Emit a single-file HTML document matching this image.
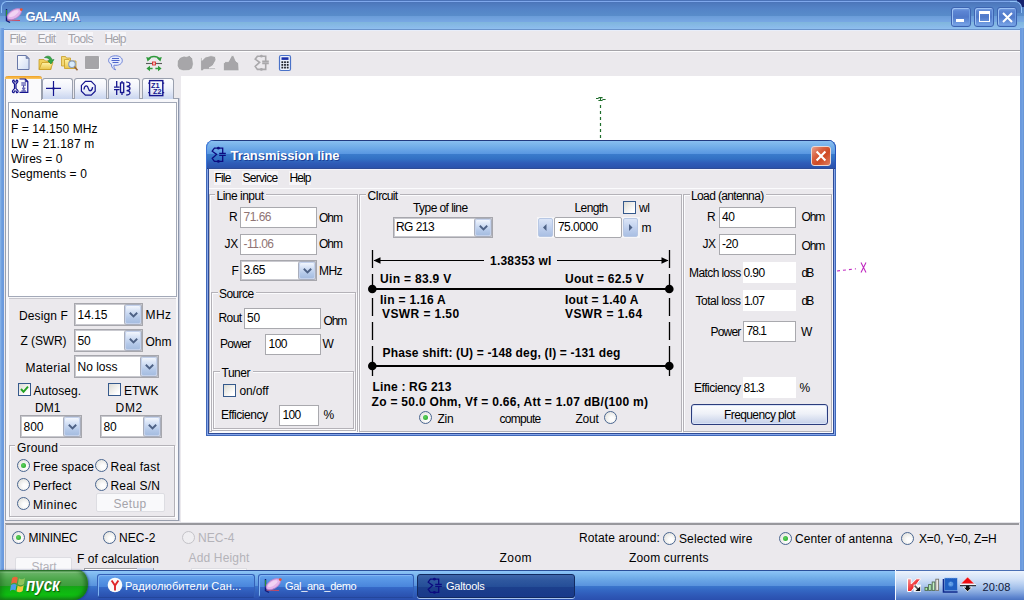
<!DOCTYPE html>
<html>
<head>
<meta charset="utf-8">
<title>GAL-ANA</title>
<style>
*{box-sizing:border-box;margin:0;padding:0}
html,body{width:1024px;height:600px;overflow:hidden;background:#fff}
body{font-family:"Liberation Sans",sans-serif;font-size:12px;color:#000;position:relative}
.a{position:absolute}
.t{position:absolute;white-space:pre;line-height:16px;height:16px}
.d{letter-spacing:-0.45px}
.b{font-weight:700}
.bg{background:#ebe9ed}
/* main window */
#mtitle{left:0;top:0;width:1024px;height:30px;background:linear-gradient(#4a72b8 0,#4a72b8 1px,#7fa8ec 1px,#7fa8ec 2px,#4a72b8 2px,#4d78bc 3px,#5382c6 8px,#588cca 15.5px,#6a9cd8 16px,#78a8e4 22px,#80b6de 22.5px,#8cbcec 28px,#90c0f0 29px,#6a94cc 29px,#6a94cc 30px)}
#mleft{left:0;top:28px;width:4px;height:544px;background:linear-gradient(90deg,#8db9ec,#79a7e2 1px,#6d9de0 2px,#6a98dc)}
#mright{left:1020px;top:28px;width:4px;height:544px;background:linear-gradient(90deg,#6a98dc,#6d9de0 2px,#79a7e2 3px,#5b87cc)}
.cap{width:20px;height:20px;border:1px solid #3d64b2;border-radius:3px;background:linear-gradient(#7ba4e4 0,#5d86d4 3px,#5079c9 9px,#6792db 14px,#82aeec 19px);box-shadow:inset 1px 1px 0 #9dc2f3,inset -1px -1px 0 #6f9ce0}
/* inputs */
.in{position:absolute;background:#fff;border:1px solid #a9a9ae;font-size:12px;line-height:14px;white-space:pre;overflow:hidden}
.in span{position:absolute;left:3px;top:3px}
.combo{position:absolute;background:#fff;border:1px solid #a7a7ad;box-shadow:inset 0 0 0 1px #c9c9cf}
.cbtn{position:absolute;right:1px;top:1px;bottom:1px;width:16px;border:1px solid #c3d1ec;border-radius:2px;background:linear-gradient(#f2f6fd,#d2dff4 35%,#b4c9e9 70%,#a6bde0);box-shadow:0 0 0 1px #a9aebc}
.cbtn svg{position:absolute;left:3px;top:50%;margin-top:-3px}
.grp{position:absolute;border:1px solid #b4b2b8;box-shadow:1px 1px 0 #fbfbfd, inset 1px 1px 0 #fbfbfd}
.gl{position:absolute;background:#ebe9ed;white-space:pre;line-height:14px;height:14px;padding:0 2px}
.rad{position:absolute;width:13px;height:13px;border-radius:50%;border:1px solid #4a6690;background:radial-gradient(circle at 62% 62%,#fdfdfd 20%,#dddcd6 95%)}
.rad.on::after{content:"";position:absolute;left:3px;top:3px;width:5px;height:5px;border-radius:50%;background:radial-gradient(circle at 40% 40%,#5fd35f,#21a121)}
.rad.dis{border-color:#c4c3c8;background:#efeef1}
.chk{position:absolute;width:13px;height:13px;border:1px solid #35598c;background:linear-gradient(135deg,#dcdbd4,#fff 80%)}
.menuit{position:absolute;background:#f6f5f8;height:14px;line-height:14px;white-space:pre}
</style>
</head>
<body>
<!-- ===== main window frame ===== -->
<div class="a bg" style="left:4px;top:30px;width:1016px;height:46px"></div>
<div class="a" id="mtitle"></div>
<div class="a" style="left:4px;top:30px;width:1016px;height:1px;background:#e8eefa"></div>
<div class="a" style="left:0;top:0;width:6px;height:6px;background:#4f7cc4"></div>
<div class="a" style="left:1px;top:1px;width:12px;height:12px;border-top:1px solid #8fc0f6;border-left:1px solid #8fc0f6;border-radius:6px 0 0 0"></div>
<div class="a" style="left:1017px;top:0;width:7px;height:7px;background:#14226e"></div>
<div class="a" style="left:1010px;top:1px;width:12px;height:12px;background:#4e7abf;border-top:1px solid #8fc0f6;border-right:1px solid #8fc0f6;border-radius:0 7px 0 0"></div>
<div class="a" id="mleft"></div>
<div class="a" id="mright"></div>
<!-- title -->
<svg class="a" style="left:5px;top:6px" width="19" height="18" viewBox="0 0 19 18">
  <path d="M1.5 3 L1.5 14.5 L5 16.5" fill="none" stroke="#141a7a" stroke-width="1.4"/>
  <path d="M1.5 4 L1.5 10" stroke="#2a8a3a" stroke-width="1.2"/>
  <path d="M2.5 14 L15 14.5" stroke="#d0475a" stroke-width="1.2"/>
  <ellipse cx="9.3" cy="8.2" rx="8" ry="4.3" transform="rotate(-32 9.3 8.2)" fill="#e3b3ea" stroke="#b67fc9" stroke-width=".8"/>
  <ellipse cx="8.8" cy="7.6" rx="5.5" ry="2.2" transform="rotate(-32 8.8 7.6)" fill="#f1d3f3"/>
  <circle cx="16.3" cy="3.6" r="1.4" fill="#f05030"/>
</svg>
<div class="t" style="left:25.5px;top:9px;font-size:13px;letter-spacing:-0.85px;font-weight:700;color:#fff;text-shadow:1px 1px 0 rgba(40,70,140,.55);">GAL-ANA</div>
<div class="a cap" style="left:951px;top:7px"><div class="a" style="left:4px;top:11px;width:8px;height:3px;background:#fff"></div></div>
<div class="a cap" style="left:974px;top:7px"><div class="a" style="left:4px;top:3px;width:11px;height:11px;border:1px solid #fff;border-top-width:3px"></div></div>
<div class="a cap" style="left:997px;top:7px"><svg class="a" style="left:3px;top:3px" width="13" height="13" viewBox="0 0 13 13"><path d="M2 2 L11 11 M11 2 L2 11" stroke="#fff" stroke-width="2"/></svg></div>
<svg class="a" style="left:251px;top:51px" width="24" height="24" viewBox="0 0 24 24"><g fill="none" stroke="#a9a8ab" stroke-width="1.6"><path d="M14.7 10.4 V5.2 H6.4 L4.2 8.2 L8.6 11.4 L4.2 15.4 L6.4 18.4 H14.7 V12.4 M11.2 10.4 H17.8 M11.2 12.4 H17.8"/></g><circle cx="10.4" cy="5.2" r="1.4" fill="#a9a8ab"/><circle cx="10.4" cy="18.4" r="1.4" fill="#a9a8ab"/></svg>

<!-- menu -->
<div class="a" style="left:10px;top:32px;width:16px;height:13px;background:#f6f5f8"></div><div class="t" style="left:9.5px;top:31px;font-size:12px;letter-spacing:-0.71px;color:#a3a2a8;">File</div>
<div class="a" style="left:37.5px;top:32px;width:18.5px;height:13px;background:#f6f5f8"></div><div class="t" style="left:37.5px;top:31px;font-size:12px;letter-spacing:-0.67px;color:#a3a2a8;">Edit</div>
<div class="a" style="left:68px;top:32px;width:25px;height:13px;background:#f6f5f8"></div><div class="t" style="left:68.0px;top:31px;font-size:12px;letter-spacing:-0.60px;color:#a3a2a8;">Tools</div>
<div class="a" style="left:104.5px;top:32px;width:21.0px;height:13px;background:#f6f5f8"></div><div class="t" style="left:104.5px;top:31px;font-size:12px;letter-spacing:-0.92px;color:#a3a2a8;">Help</div>

<div class="a" style="left:4px;top:50px;width:1016px;height:1px;background:#a5a4a9"></div>
<div class="a" style="left:4px;top:51px;width:1016px;height:1px;background:#fdfdfe"></div>
<!--MENU-->
<!-- toolbar -->
<svg class="a" style="left:14px;top:53px" width="282" height="20" viewBox="0 0 282 20">
  <defs>
    <linearGradient id="pg" x1="0" y1="0" x2="1" y2="1"><stop offset="0" stop-color="#ffffff"/><stop offset="1" stop-color="#cfdcf4"/></linearGradient>
    <linearGradient id="fy" x1="0" y1="0" x2="0" y2="1"><stop offset="0" stop-color="#fff3a8"/><stop offset="1" stop-color="#e9c44a"/></linearGradient>
  </defs>
  <!-- new -->
  <path d="M3.5 2.5 H12 L15 5.5 V16.5 H3.5 Z" fill="url(#pg)" stroke="#6878a8" stroke-width="1"/>
  <path d="M12 2.5 V5.5 H15 Z" fill="#7f8db4" stroke="#6878a8" stroke-width=".6"/>
  <!-- open -->
  <path d="M25 6.5 H30 L31.5 8 H37 V16.5 H25 Z" fill="#f0cf5a" stroke="#c79c24" stroke-width=".8"/>
  <path d="M25 16.5 L28 9.5 H39 L36.5 16.5 Z" fill="url(#fy)" stroke="#c79c24" stroke-width=".8"/>
  <path d="M30.5 4.5 C33.5 2 37.5 3 38 7 L40 6.5 L37 11 L33.8 7.8 L35.8 7.5 C35.4 5.4 33 4.6 30.5 4.5 Z" fill="#35a846" stroke="#1f7a2d" stroke-width=".6"/>
  <!-- folder search -->
  <path d="M47.5 3.5 H51.5 L52.5 5 H56.5 V13 H47.5 Z" fill="#f3d876" stroke="#c79c24" stroke-width=".8"/>
  <path d="M50.5 6.5 H55 L56 8 H62 V15.5 H50.5 Z" fill="url(#fy)" stroke="#c79c24" stroke-width=".8"/>
  <circle cx="58" cy="11.2" r="3.3" fill="#d8ecfb" stroke="#8a9ab8" stroke-width="1.1"/>
  <path d="M60.5 13.8 L63.5 17.2" stroke="#9a6a3a" stroke-width="1.6"/>
  <!-- gray square -->
  <rect x="72" y="4" width="14" height="13" fill="#fcfcfd"/>
  <rect x="71" y="3" width="14" height="13" rx="1" fill="#a6a5a8"/>
  <!-- speech bubble -->
  <path d="M101.5 2.8 C106 2.8 108.3 5 108.3 7.6 C108.3 10.4 105.6 12.3 102 12.3 C101.2 12.3 100.6 12.2 100 12.1 C99.6 13.6 100.2 15.2 101.6 16.8 C98.6 16 97.3 14 97.4 11.2 C95.6 10.4 94.6 9.1 94.6 7.6 C94.6 5 97 2.8 101.5 2.8 Z" fill="#e6ebfd" stroke="#6a80d6" stroke-width="1"/>
  <path d="M98 5.5 H105 M97.5 7.5 H105.5 M98.5 9.5 H104.5" stroke="#4e66cc" stroke-width="1"/>
  <!-- green arrows (local = abs-14, abs-53) -->
  <g transform="translate(-14 -53)">
  <path d="M148.6 59.2 C150.6 55.6 157.4 55.6 159.4 59.2" fill="none" stroke="#2f9a3c" stroke-width="1.5"/>
  <path d="M146.2 57 L151 58.2 L147.6 61.4 Z M161.8 57 L157 58.2 L160.4 61.4 Z" fill="#2f9a3c"/>
  <path d="M146 63.5 H162" stroke="#5a5a5a" stroke-width="1.1"/>
  <rect x="152.5" y="62" width="3" height="3" fill="#f6c0c0" stroke="#d83030" stroke-width=".9"/>
  <path d="M148.5 68.5 H152.6 M155.4 68.5 H159.5" stroke="#2f9a3c" stroke-width="1.4"/>
  <path d="M146.4 68.5 L150 65.8 V71.2 Z M161.6 68.5 L158 65.8 V71.2 Z" fill="#2f9a3c"/>
  <g fill="#a7a6a9" stroke="#f6f6f8" stroke-width=".7">
  <path d="M177.4 61 L180 57.4 L184 56 L186.5 56.6 L189.4 55.4 L192.6 58.4 L193.4 64 L192.4 68.4 L189 70.6 L183 70.8 L179 69.4 L177.2 66 Z"/>
  <path d="M200.6 57.4 H202 V60.4 L205.4 57 L211 55.6 L215.4 56.6 L216 60 L213 65.4 L209 68 H215.6 V69.4 H204 L202.4 70.8 H200.6 Z"/>
  <path d="M223.4 70.8 V63.6 L225.6 61.6 H228.4 L231.6 55.6 H233.6 L236 61.2 L238.6 63 L239 70.8 Z"/>
  </g>
  </g>
  
  <!-- calculator -->
  <rect x="265.5" y="2.5" width="11" height="15" rx="1.5" fill="#eef3fc" stroke="#4a72c8" stroke-width="1.2"/>
  <rect x="267.5" y="4.3" width="7" height="2.6" fill="#1b2fa8"/>
  <g fill="#20242c">
  <rect x="267.4" y="8.3" width="1.8" height="1.8"/><rect x="270.1" y="8.3" width="1.8" height="1.8"/><rect x="272.8" y="8.3" width="1.8" height="1.8"/>
  <rect x="267.4" y="11" width="1.8" height="1.8"/><rect x="270.1" y="11" width="1.8" height="1.8"/><rect x="272.8" y="11" width="1.8" height="1.8"/>
  <rect x="267.4" y="13.7" width="1.8" height="1.8"/><rect x="270.1" y="13.7" width="1.8" height="1.8"/><rect x="272.8" y="13.7" width="1.8" height="1.8"/>
  </g>
</svg>
<!--TOOLBAR-->
<div class="a" style="left:4px;top:76px;width:177px;height:447px;background:#ebe9ed"></div>
<div class="a" style="left:5px;top:98px;width:174px;height:423px;background:#f7f7fa;border:1px solid #9aa0ae;border-right-color:#8d96ab;box-shadow:1px 0 0 #c9cede"></div>
<div class="a" style="left:42px;top:78px;width:31px;height:21px;border:1px solid #9aa0ae;border-bottom:none;border-radius:3px 3px 0 0;background:linear-gradient(#fdfdfe,#f0f3fb 45%,#c9d5ef)"></div>
<div class="a" style="left:74px;top:78px;width:33px;height:21px;border:1px solid #9aa0ae;border-bottom:none;border-radius:3px 3px 0 0;background:linear-gradient(#fdfdfe,#f0f3fb 45%,#c9d5ef)"></div>
<div class="a" style="left:108px;top:78px;width:32px;height:21px;border:1px solid #9aa0ae;border-bottom:none;border-radius:3px 3px 0 0;background:linear-gradient(#fdfdfe,#f0f3fb 45%,#c9d5ef)"></div>
<div class="a" style="left:142px;top:78px;width:32px;height:21px;border:1px solid #9aa0ae;border-bottom:none;border-radius:3px 3px 0 0;background:linear-gradient(#fdfdfe,#f0f3fb 45%,#c9d5ef)"></div>
<div class="a" style="left:5px;top:76px;width:37px;height:24px;border:1px solid #9aa0ae;border-bottom:none;border-top:none;border-radius:3px 3px 0 0;background:#fafafc"></div>
<div class="a" style="left:5px;top:76px;width:37px;height:3px;border-radius:3px 3px 0 0;background:linear-gradient(#f0a020,#fbc968)"></div>
<svg class="a" style="left:5px;top:76px" width="175" height="24" viewBox="5 76 175 24"><g fill="none" stroke="#15158f" stroke-width="1.2"><path d="M13.2 82.6 C12 81.6 12.6 80 14 80.2 L14.4 82 L16 82 L16.4 80.2 C17.8 80 18.4 81.6 17.2 82.6 L16 84 V88.6 L17.6 90.2 C18.8 91.4 17.8 93 16.5 92.6 L16.2 91 L14.4 91 L14 92.6 C12.6 93 11.8 91.4 13 90.2 L14.5 88.6 V84 Z"/><path d="M19.5 79 H25.3 L27.8 81.6 V92.4 H19.5" /><path d="M25.3 79 V81.6 H27.8" stroke-width=".9"/><path d="M21.3 83 H26 M21.3 85 H26 M23.6 85.5 V87.6 M22 88.2 H25.4 M22.6 89.8 H24.8 M21.3 91 H26" stroke-width=".9"/><path d="M46 88.4 H61 M53.5 81 V96"/><path d="M85.4 81.4 H91.2 L95.2 85.4 V91.2 L91.2 95.2 H85.4 L81.4 91.2 V85.4 Z"/><path d="M84 89.5 C84.5 85 87.5 85 88.3 88.3 C89.2 91.8 92 91.6 92.6 87.2" stroke-width="1.3"/><path d="M116.7 81 V87 M116.7 89.8 V95 M114 87.1 H119.6 M114 89.7 H119.6" stroke-width="1.3"/><path d="M122 81 V82.8 M122 92.6 V95" stroke-width="1.3"/><rect x="120.5" y="82.9" width="3.2" height="9.6" stroke-width="1.3"/><path d="M126 82 C128 82 130 83 130 84.2 C130 85.4 128 86.3 126.6 86.4 C128 86.5 130 87.3 130 88.5 C130 89.7 128 90.6 126.6 90.7 C128 90.8 130 91.6 130 92.8 C130 94 128 95 126 95" stroke-width="1.2"/><rect x="149.6" y="80.6" width="13.2" height="15" stroke-width="1.4"/><path d="M148.2 83.2 H149.6 M148.2 92.6 H149.6 M162.8 83.2 H164.2 M162.8 92.6 H164.2" stroke-width="1.2"/></g><text x="151" y="87.6" font-family="Liberation Sans" font-weight="700" font-size="7.5" fill="#15158f" textLength="8.5" lengthAdjust="spacingAndGlyphs">Z1</text><text x="153" y="94.4" font-family="Liberation Sans" font-weight="700" font-size="7.5" fill="#15158f" textLength="8.5" lengthAdjust="spacingAndGlyphs">Z2</text><circle cx="53.5" cy="88.4" r="1.2" fill="#15158f"/></svg>

<div class="a" style="left:8px;top:102px;width:169px;height:195px;background:#fff;border:1px solid #a3a9b8"></div>
<div class="t" style="left:11.0px;top:106px;font-size:12px;letter-spacing:0.36px;">Noname</div>
<div class="t" style="left:11.0px;top:121px;font-size:12px;letter-spacing:0.06px;">F = 14.150 MHz</div>
<div class="t" style="left:11.0px;top:136px;font-size:12px;letter-spacing:0.21px;">LW = 21.187 m</div>
<div class="t" style="left:11.0px;top:151px;font-size:12px;letter-spacing:0.05px;">Wires = 0</div>
<div class="t" style="left:11.0px;top:166px;font-size:12px;letter-spacing:0.14px;">Segments = 0</div>
<div class="a" style="left:9px;top:298px;width:167px;height:143px;background:#ebe9ed;border-top:1px solid #c8c7cd"></div>
<div class="t" style="left:19.0px;top:308px;font-size:12px;letter-spacing:0.12px;">Design F</div>
<div class="combo" style="left:74px;top:303px;width:69px;height:23px"><div class="cbtn"><svg width="9" height="6" viewBox="0 0 9 6"><path d="M0.8 0.8 L4.5 4.4 L8.2 0.8" fill="none" stroke="#4d6185" stroke-width="1.9"/></svg></div></div>
<div class="t" style="left:77.5px;top:307px;font-size:12px;letter-spacing:-0.00px;">14.15</div>
<div class="t" style="left:145.5px;top:307px;font-size:12px;letter-spacing:0.44px;">MHz</div>
<div class="t" style="left:20.5px;top:333px;font-size:12px;letter-spacing:-0.09px;">Z (SWR)</div>
<div class="combo" style="left:74px;top:329px;width:69px;height:23px"><div class="cbtn"><svg width="9" height="6" viewBox="0 0 9 6"><path d="M0.8 0.8 L4.5 4.4 L8.2 0.8" fill="none" stroke="#4d6185" stroke-width="1.9"/></svg></div></div>
<div class="t" style="left:77.5px;top:333px;font-size:12px;letter-spacing:-0.17px;">50</div>
<div class="t" style="left:145.5px;top:334px;font-size:12px;letter-spacing:0.00px;">Ohm</div>
<div class="t" style="left:25.5px;top:360px;font-size:12px;letter-spacing:0.29px;">Material</div>
<div class="combo" style="left:74px;top:355px;width:85px;height:23px"><div class="cbtn"><svg width="9" height="6" viewBox="0 0 9 6"><path d="M0.8 0.8 L4.5 4.4 L8.2 0.8" fill="none" stroke="#4d6185" stroke-width="1.9"/></svg></div></div>
<div class="t" style="left:77.5px;top:359px;font-size:12px;letter-spacing:-0.00px;">No loss</div>
<div class="chk" style="left:18px;top:383px"><svg width="11" height="11" viewBox="0 0 11 11" style="position:absolute;left:0;top:0"><path d="M2 5 L4.5 7.8 L9 2.6" fill="none" stroke="#21a121" stroke-width="1.9"/></svg></div>
<div class="t" style="left:33.5px;top:383px;font-size:12px;letter-spacing:0.02px;">Autoseg.</div>
<div class="chk" style="left:108px;top:383px"></div>
<div class="t" style="left:124.0px;top:383px;font-size:12px;letter-spacing:-0.04px;">ETWK</div>
<div class="t" style="left:35.0px;top:400px;font-size:12px;letter-spacing:0.05px;">DM1</div>
<div class="t" style="left:115.5px;top:400px;font-size:12px;letter-spacing:0.72px;">DM2</div>
<div class="combo" style="left:20px;top:415px;width:62px;height:23px"><div class="cbtn"><svg width="9" height="6" viewBox="0 0 9 6"><path d="M0.8 0.8 L4.5 4.4 L8.2 0.8" fill="none" stroke="#4d6185" stroke-width="1.9"/></svg></div></div>
<div class="t" style="left:23.5px;top:419px;font-size:12px;letter-spacing:-0.01px;">800</div>
<div class="combo" style="left:100px;top:415px;width:62px;height:23px"><div class="cbtn"><svg width="9" height="6" viewBox="0 0 9 6"><path d="M0.8 0.8 L4.5 4.4 L8.2 0.8" fill="none" stroke="#4d6185" stroke-width="1.9"/></svg></div></div>
<div class="t" style="left:103.5px;top:419px;font-size:12px;letter-spacing:-0.17px;">80</div>
<div class="a" style="left:9px;top:441px;width:167px;height:79px;background:#ebe9ed"></div>
<div class="grp" style="left:9px;top:445px;width:166px;height:72px"></div>
<div class="gl" style="left:15px;top:445px;height:2px;width:45px"></div><div class="t" style="left:17.0px;top:440px;font-size:12px;letter-spacing:0.16px;">Ground</div>
<div class="rad on" style="left:17px;top:459px"></div><div class="t" style="left:33.0px;top:459px;font-size:12px;letter-spacing:0.10px;">Free space</div>
<div class="rad" style="left:95px;top:459px"></div><div class="t" style="left:110.5px;top:459px;font-size:12px;letter-spacing:0.24px;">Real fast</div>
<div class="rad" style="left:17px;top:478px"></div><div class="t" style="left:33.0px;top:478px;font-size:12px;letter-spacing:0.07px;">Perfect</div>
<div class="rad" style="left:95px;top:478px"></div><div class="t" style="left:110.5px;top:478px;font-size:12px;letter-spacing:0.19px;">Real S/N</div>
<div class="rad" style="left:17px;top:497px"></div><div class="t" style="left:33.0px;top:497px;font-size:12px;letter-spacing:0.45px;">Mininec</div>
<div class="a" style="left:96px;top:493px;width:69px;height:19px;background:#f9f9fb;border:1px solid #dddde2;border-radius:2px"></div><div class="t" style="left:113.5px;top:496px;font-size:12px;letter-spacing:0.33px;color:#a5a4aa;">Setup</div>

<svg class="a" style="left:590px;top:94px" width="280" height="185" viewBox="590 94 280 185"><path d="M600.5 105 V139" stroke="#1f6e2c" stroke-width="1.2" stroke-dasharray="3 3"/><path d="M596 98.5 H598.6 M598.4 97.6 H602.6 M600.5 97.6 V100.6 M598.4 100.5 H602.6 M602.4 99.5 H605.6" stroke="#1f6e2c" stroke-width="1.1" fill="none"/><path d="M837 271 L856 268.8" stroke="#c02cc0" stroke-width="1.1" stroke-dasharray="3 3"/><path d="M861 262.4 L866 272.6 M866 262.4 L861 272.6" stroke="#c02cc0" stroke-width="1.1"/></svg>

<div class="a" style="left:206px;top:140px;width:630px;height:296px;background:#86a6ea;border-radius:8px 8px 0 0;box-shadow:inset 0 0 0 1px #4068b8"></div>
<div class="a" style="left:206px;top:140px;width:630px;height:29px;border-radius:8px 8px 0 0;background:linear-gradient(#223a80 0,#223a80 1px,#8cc0f4 1px,#84bcee 2px,#6eaae8 8px,#5a98e2 13.5px,#3a7ccc 14px,#3270c4 19px,#2f5cb8 23px,#2a52ac 28px,#22408c 28px,#22408c 29px);box-shadow:inset 1px 0 0 #3c73d6,inset -1px 0 0 #2450b8"></div>
<div class="a bg" style="left:209px;top:169px;width:624px;height:264px;box-shadow:0 0 0 1px #2f4c96"></div>
<div class="a" style="left:209px;top:169px;width:624px;height:1px;background:#f2f2fb"></div>
<svg class="a" style="left:208px;top:143px" width="24" height="24" viewBox="0 0 24 24"><g fill="none" stroke="#0c0c80" stroke-width="1.3"><path d="M14.7 10.4 V5.2 H6.4 L4.2 8.2 L8.6 11.4 L4.2 15.4 L6.4 18.4 H14.7 V12.4 M11.2 10.4 H17.8 M11.2 12.4 H17.8"/></g><circle cx="10.4" cy="5.2" r="1.4" fill="#0c0c80"/><circle cx="10.4" cy="18.4" r="1.4" fill="#0c0c80"/></svg>

<div class="t" style="left:230.5px;top:148px;font-size:13px;letter-spacing:-0.05px;font-weight:700;color:#fff;text-shadow:1px 1px 0 #1c3f96;">Transmission line</div>
<div class="a" style="left:811px;top:146px;width:20px;height:20px;border:1px solid #e9d8d4;border-radius:3px;background:linear-gradient(135deg,#e8a08c 0,#d9603f 35%,#cf4a24 60%,#e07e60 100%)"><svg class="a" style="left:3px;top:3px" width="12" height="12" viewBox="0 0 12 12"><path d="M1.6 1.6 L10.4 10.4 M10.4 1.6 L1.6 10.4" stroke="#fff" stroke-width="2.1"/></svg></div>
<div class="a" style="left:214px;top:171px;width:17px;height:14px;background:#f6f5f8"></div><div class="t" style="left:214.5px;top:170px;font-size:12px;letter-spacing:-0.84px;">File</div>
<div class="a" style="left:242px;top:171px;width:36px;height:14px;background:#f6f5f8"></div><div class="t" style="left:242.5px;top:170px;font-size:12px;letter-spacing:-0.72px;">Service</div>
<div class="a" style="left:289px;top:171px;width:22px;height:14px;background:#f6f5f8"></div><div class="t" style="left:289.5px;top:170px;font-size:12px;letter-spacing:-0.92px;">Help</div>
<div class="a" style="left:209px;top:188px;width:624px;height:1px;background:#fbfbfd"></div>
<div class="grp" style="left:209px;top:194px;width:149px;height:238px"></div>
<div class="gl" style="left:215px;top:194px;height:2px;width:51px"></div><div class="t" style="left:216.5px;top:188px;font-size:12px;letter-spacing:-0.50px;">Line input</div>
<div class="t" style="left:229.0px;top:209px;font-size:12px;letter-spacing:-0.67px;">R</div>
<div class="in" style="left:240px;top:207px;width:77px;height:21px;"></div>
<div class="t" style="left:243.5px;top:209px;font-size:12px;letter-spacing:-0.50px;color:#8f7474;">71.66</div>
<div class="t" style="left:319.0px;top:210px;font-size:12px;letter-spacing:-1.00px;">Ohm</div>
<div class="t" style="left:224.5px;top:236px;font-size:12px;letter-spacing:-0.25px;">JX</div>
<div class="in" style="left:240px;top:234px;width:77px;height:21px;"></div>
<div class="t" style="left:243.5px;top:236px;font-size:12px;letter-spacing:-0.52px;color:#8f7474;">-11.06</div>
<div class="t" style="left:319.0px;top:236px;font-size:12px;letter-spacing:-1.00px;">Ohm</div>
<div class="t" style="left:231.5px;top:263px;font-size:12px;letter-spacing:-1.33px;">F</div>
<div class="combo" style="left:240px;top:260px;width:77px;height:21px"><div class="cbtn"><svg width="9" height="6" viewBox="0 0 9 6"><path d="M0.8 0.8 L4.5 4.4 L8.2 0.8" fill="none" stroke="#4d6185" stroke-width="1.9"/></svg></div></div>
<div class="t" style="left:243.5px;top:262px;font-size:12px;letter-spacing:-0.46px;">3.65</div>
<div class="t" style="left:319.0px;top:263px;font-size:12px;letter-spacing:-0.56px;">MHz</div>
<div class="grp" style="left:211px;top:292px;width:145px;height:139px"></div>
<div class="gl" style="left:217.5px;top:292px;height:2px;width:38.5px"></div><div class="t" style="left:219.0px;top:286px;font-size:12px;letter-spacing:-0.59px;">Source</div>
<div class="t" style="left:218.5px;top:310px;font-size:12px;letter-spacing:-0.59px;">Rout</div>
<div class="in" style="left:244px;top:308px;width:77px;height:21px;"></div>
<div class="t" style="left:247.0px;top:310px;font-size:12px;letter-spacing:-0.17px;">50</div>
<div class="t" style="left:323.5px;top:313px;font-size:12px;letter-spacing:-1.17px;">Ohm</div>
<div class="t" style="left:220.0px;top:336px;font-size:12px;letter-spacing:-0.70px;">Power</div>
<div class="in" style="left:265px;top:334px;width:56px;height:21px;"></div>
<div class="t" style="left:268.5px;top:336px;font-size:12px;letter-spacing:-0.51px;">100</div>
<div class="t" style="left:322.5px;top:336px;font-size:12px;letter-spacing:0.67px;">W</div>
<div class="grp" style="left:213px;top:371px;width:141px;height:58px"></div>
<div class="gl" style="left:220px;top:371px;height:2px;width:32.5px"></div><div class="t" style="left:221.5px;top:365px;font-size:12px;letter-spacing:-0.48px;">Tuner</div>
<div class="chk" style="left:223px;top:384px"></div><div class="t" style="left:239.5px;top:383px;font-size:12px;letter-spacing:-0.13px;">on/off</div>
<div class="t" style="left:221.0px;top:407px;font-size:12px;letter-spacing:-0.46px;">Efficiency</div>
<div class="in" style="left:279px;top:405px;width:40px;height:21px;"></div>
<div class="t" style="left:282.5px;top:407px;font-size:12px;letter-spacing:-0.67px;">100</div>
<div class="t" style="left:323.5px;top:407px;font-size:12px;letter-spacing:-2.67px;">%</div>
<div class="grp" style="left:359px;top:194px;width:323px;height:238px"></div>
<div class="gl" style="left:366px;top:194px;height:2px;width:34px"></div><div class="t" style="left:367.5px;top:188px;font-size:12px;letter-spacing:-0.67px;">CIrcuit</div>
<div class="t" style="left:413.0px;top:200px;font-size:12px;letter-spacing:-0.57px;">Type of line</div>
<div class="t" style="left:574.5px;top:200px;font-size:12px;letter-spacing:-0.61px;">Length</div>
<div class="chk" style="left:623px;top:201px"></div><div class="t" style="left:639.0px;top:200px;font-size:12px;letter-spacing:-0.42px;">wl</div>
<div class="combo" style="left:393px;top:217px;width:100px;height:21px"><div class="cbtn"><svg width="9" height="6" viewBox="0 0 9 6"><path d="M0.8 0.8 L4.5 4.4 L8.2 0.8" fill="none" stroke="#4d6185" stroke-width="1.9"/></svg></div></div>
<div class="t" style="left:396.0px;top:219px;font-size:12px;letter-spacing:-0.56px;">RG 213</div>
<div class="a" style="left:537px;top:217px;width:103px;height:21px;background:#f5f5f8"></div>
<div class="a" style="left:538px;top:218px;width:15px;height:19px;border:1px solid #b7c7e4;border-radius:2px;background:linear-gradient(#dbe5f7,#bccdec 60%,#a9bfe3)"><svg width="11" height="13" viewBox="0 0 11 13" style="position:absolute;left:1px;top:2px"><path d="M6.5 3 L3 6.5 L6.5 10 Z" fill="#4d6185"/></svg></div>
<div class="a" style="left:623px;top:218px;width:15px;height:19px;border:1px solid #b7c7e4;border-radius:2px;background:linear-gradient(#dbe5f7,#bccdec 60%,#a9bfe3)"><svg width="11" height="13" viewBox="0 0 11 13" style="position:absolute;left:1px;top:2px"><path d="M4 3 L7.5 6.5 L4 10 Z" fill="#4d6185"/></svg></div>
<div class="in" style="left:554px;top:217px;width:68px;height:21px;border-radius:2px;"></div>
<div class="t" style="left:558.0px;top:219px;font-size:12px;letter-spacing:-0.55px;">75.0000</div>
<div class="t" style="left:641.5px;top:220px;font-size:12px;letter-spacing:-2.00px;">m</div>
<svg class="a" style="left:362px;top:245px" width="318" height="140" viewBox="362 245 318 140"><path d="M372.5 250 V376" stroke="#000" stroke-width="1.3" stroke-dasharray="18 6"/><path d="M669.5 250 V376" stroke="#000" stroke-width="1.3" stroke-dasharray="18 6"/><path d="M374 260.5 H484 M557 260.5 H668" stroke="#000" stroke-width="1.2"/><path d="M373.5 260.5 L380.5 257.2 V263.8 Z M668.5 260.5 L661.5 257.2 V263.8 Z" fill="#000"/><path d="M372 289 H669" stroke="#000" stroke-width="2.2"/><circle cx="372.3" cy="289" r="4.3" fill="#000"/><circle cx="669.3" cy="289" r="4.3" fill="#000"/><path d="M372 366 H669" stroke="#000" stroke-width="2.2"/><circle cx="372.3" cy="366" r="4.3" fill="#000"/><circle cx="669.3" cy="366" r="4.3" fill="#000"/></svg>

<div class="t" style="left:490.0px;top:253px;font-size:12px;letter-spacing:0.22px;font-weight:700;">1.38353 wl</div>
<div class="t" style="left:380.0px;top:271px;font-size:12px;letter-spacing:0.32px;font-weight:700;">Uin = 83.9 V</div>
<div class="t" style="left:565.0px;top:271px;font-size:12px;letter-spacing:0.26px;font-weight:700;">Uout = 62.5 V</div>
<div class="t" style="left:380.0px;top:292px;font-size:12px;letter-spacing:0.29px;font-weight:700;">Iin = 1.16 A</div>
<div class="t" style="left:565.0px;top:292px;font-size:12px;letter-spacing:0.23px;font-weight:700;">Iout = 1.40 A</div>
<div class="t" style="left:382.0px;top:306px;font-size:12px;letter-spacing:0.41px;font-weight:700;">VSWR = 1.50</div>
<div class="t" style="left:565.0px;top:306px;font-size:12px;letter-spacing:0.41px;font-weight:700;">VSWR = 1.64</div>
<div class="t" style="left:382.5px;top:345px;font-size:12px;letter-spacing:0.17px;font-weight:700;">Phase shift: (U) = -148 deg, (I) = -131 deg</div>
<div class="t" style="left:372.5px;top:379px;font-size:12px;letter-spacing:0.18px;font-weight:700;">Line : RG 213</div>
<div class="t" style="left:371.5px;top:394px;font-size:12px;letter-spacing:0.30px;font-weight:700;">Zo = 50.0 Ohm, Vf = 0.66, Att = 1.07 dB/(100 m)</div>
<div class="rad on" style="left:419px;top:411px"></div><div class="t" style="left:437.5px;top:411px;font-size:12px;letter-spacing:-0.22px;">Zin</div>
<div class="t" style="left:499.5px;top:411px;font-size:12px;letter-spacing:-0.72px;">compute</div>
<div class="t" style="left:575.5px;top:411px;font-size:12px;letter-spacing:-0.25px;">Zout</div>
<div class="rad" style="left:604px;top:411px"></div>
<div class="grp" style="left:683px;top:194px;width:149px;height:238px"></div>
<div class="gl" style="left:689.5px;top:194px;height:2px;width:76.5px"></div><div class="t" style="left:691.0px;top:188px;font-size:12px;letter-spacing:-0.63px;">Load (antenna)</div>
<div class="t" style="left:707.0px;top:209px;font-size:12px;letter-spacing:-0.67px;">R</div>
<div class="in" style="left:719px;top:207px;width:77px;height:21px;"></div>
<div class="t" style="left:722.0px;top:209px;font-size:12px;letter-spacing:-0.42px;">40</div>
<div class="t" style="left:801.5px;top:209px;font-size:12px;letter-spacing:-1.17px;">Ohm</div>
<div class="t" style="left:702.5px;top:236px;font-size:12px;letter-spacing:-0.50px;">JX</div>
<div class="in" style="left:719px;top:234px;width:77px;height:21px;"></div>
<div class="t" style="left:722.0px;top:236px;font-size:12px;letter-spacing:-0.45px;">-20</div>
<div class="t" style="left:801.5px;top:238px;font-size:12px;letter-spacing:-1.17px;">Ohm</div>
<div class="t" style="left:689.0px;top:265px;font-size:12px;letter-spacing:-0.58px;">Match loss</div>
<div class="in" style="left:743px;top:262px;width:53px;height:21px;border:none;"></div>
<div class="t" style="left:743.5px;top:265px;font-size:12px;letter-spacing:-0.59px;">0.90</div>
<div class="t" style="left:801.5px;top:265px;font-size:12px;letter-spacing:-1.84px;">dB</div>
<div class="t" style="left:695.5px;top:293px;font-size:12px;letter-spacing:-0.50px;">Total loss</div>
<div class="in" style="left:743px;top:290px;width:53px;height:21px;border:none;"></div>
<div class="t" style="left:744.0px;top:293px;font-size:12px;letter-spacing:-0.84px;">1.07</div>
<div class="t" style="left:801.5px;top:293px;font-size:12px;letter-spacing:-1.84px;">dB</div>
<div class="t" style="left:710.5px;top:324px;font-size:12px;letter-spacing:-0.80px;">Power</div>
<div class="in" style="left:743px;top:321px;width:53px;height:21px;"></div>
<div class="t" style="left:746.5px;top:323px;font-size:12px;letter-spacing:-0.96px;">78.1</div>
<div class="t" style="left:801.0px;top:324px;font-size:12px;letter-spacing:-0.33px;">W</div>
<div class="t" style="left:694.0px;top:380px;font-size:12px;letter-spacing:-0.46px;">Efficiency</div>
<div class="in" style="left:743px;top:377px;width:53px;height:21px;border:none;"></div>
<div class="t" style="left:743.5px;top:380px;font-size:12px;letter-spacing:-0.71px;">81.3</div>
<div class="t" style="left:799.5px;top:380px;font-size:12px;letter-spacing:-2.17px;">%</div>
<div class="a" style="left:691px;top:404px;width:137px;height:21px;border:1px solid #2b3c7c;border-radius:3px;background:linear-gradient(#fdfdfe,#eef1f8 45%,#c5d0e8);box-shadow:inset 0 0 0 1px #d9e3f7"></div><div class="t" style="left:724.0px;top:407px;font-size:12px;letter-spacing:-0.60px;">Frequency plot</div>

<div class="a bg" style="left:4px;top:522px;width:1016px;height:48px"></div>
<div class="a" style="left:5px;top:523px;width:1014px;height:2px;background:#98989d"></div>
<div class="a" style="left:5px;top:524px;width:1px;height:46px;background:#b9b8be"></div>
<div class="a" style="left:180px;top:522px;width:840px;height:1px;background:#e3e3e8"></div>
<div class="rad on" style="left:12px;top:531px"></div><div class="t" style="left:28.5px;top:530px;font-size:12px;letter-spacing:-0.24px;">MININEC</div>
<div class="rad" style="left:103px;top:531px"></div><div class="t" style="left:119.0px;top:530px;font-size:12px;letter-spacing:0.10px;">NEC-2</div>
<div class="rad dis" style="left:182px;top:531px"></div><div class="t" style="left:198.0px;top:530px;font-size:12px;letter-spacing:0.10px;color:#b4b3b9;">NEC-4</div>
<div class="a" style="left:15px;top:557px;width:57px;height:14px;background:#f9f9fb;border:1px solid #dddde2;border-radius:2px 2px 0 0"></div><div class="t" style="left:31.5px;top:559px;font-size:12px;letter-spacing:-0.07px;color:#b4b3b9;">Start</div>
<div class="t" style="left:77.0px;top:551px;font-size:12px;letter-spacing:0.08px;">F of calculation</div>
<div class="a" style="left:84px;top:568px;width:70px;height:4px;background:#fff;border:1px solid #9d9da1"></div>
<div class="a" style="left:137px;top:568px;width:16px;height:4px;background:#cfdbf2"></div>
<div class="t" style="left:188.5px;top:550px;font-size:12px;letter-spacing:0.16px;color:#b4b3b9;">Add Height</div>
<div class="a" style="left:191px;top:568px;width:56px;height:4px;background:#f9f9fb;border:1px solid #dddde2"></div>
<div class="t" style="left:499.5px;top:550px;font-size:12px;letter-spacing:0.46px;">Zoom</div>
<div class="t" style="left:579.0px;top:530px;font-size:12px;letter-spacing:0.12px;">Rotate around:</div>
<div class="rad" style="left:663px;top:532px"></div><div class="t" style="left:679.0px;top:531px;font-size:12px;letter-spacing:0.11px;">Selected wire</div>
<div class="rad on" style="left:779px;top:532px"></div><div class="t" style="left:795.0px;top:531px;font-size:12px;letter-spacing:0.09px;">Center of antenna</div>
<div class="rad" style="left:901px;top:532px"></div><div class="t" style="left:919.0px;top:531px;font-size:12px;letter-spacing:-0.15px;">X=0, Y=0, Z=H</div>
<div class="t" style="left:629.0px;top:550px;font-size:12px;letter-spacing:0.17px;">Zoom currents</div>

<div class="a" style="left:0;top:570px;width:1024px;height:30px;background:linear-gradient(#2a4f9a 0,#2a4f9a 1px,#8fc4f6 1px,#84bef2 3px,#78b4ec 6px,#66a2e4 11px,#5a94de 15.5px,#3b76cc 16px,#3468c4 20px,#2f5ab8 25px,#2a4fae 30px)"></div>
<div class="a" style="left:895px;top:570px;width:129px;height:30px;background:linear-gradient(#4a6fb4 0,#4a6fb4 1px,#eef4fd 1px,#e2ecfa 4px,#d3e2f7 9px,#b9d0f1 14px,#9dbbe8 19px,#7fa2dc 23px,#5f86cf 27px,#4c74c2 30px);box-shadow:inset 1px 0 0 #f4f8ff"></div>
<div class="a" style="left:0;top:570px;width:88px;height:30px;border-radius:0 10px 14px 0/0 14px 16px 0;background:linear-gradient(#2c6a2c 0,#4a9a4a 1px,#a6dca4 2px,#6fbb6d 3px,#5eb05c 5px,#4aa548 10px,#3f9d3e 15.5px,#16a417 16px,#10b512 21px,#0fbd11 25px,#17a019 30px);box-shadow:inset -3px 0 4px rgba(20,90,20,.7),inset 3px 0 4px rgba(20,90,20,.35),1px 0 2px rgba(10,30,90,.5)"></div>
<svg class="a" style="left:10px;top:576px" width="15" height="17" viewBox="0 2 14 12.5" preserveAspectRatio="none"><path d="M2 3.5 C4 2.2 6 2.4 7.3 3.3 L6.3 7.6 C5 6.7 3 6.6 1 7.8 Z" fill="#e8663a"/><path d="M8.3 3.7 C10 4.8 12 4.7 14 3.5 L13 7.8 C11 9 9 9 7.3 8 Z" fill="#8fc45a"/><path d="M0.8 8.8 C3 7.6 5 7.8 6.1 8.6 L5.1 12.9 C3.8 12 2 11.9 0 13 Z" fill="#4a9de8"/><path d="M7.1 9 C8.8 10 10.8 10 12.8 8.8 L11.8 13.1 C9.8 14.3 7.8 14.2 6.1 13.3 Z" fill="#f4c63a"/></svg>
<div class="t" style="left:26px;top:574px;font-size:18px;line-height:22px;height:22px;font-weight:700;font-style:italic;color:#fff;transform-origin:0 0;transform:scaleX(.84);text-shadow:1px 1px 1px rgba(0,50,0,.7)">пуск</div>
<div class="a" style="left:97px;top:574px;width:158px;height:24px;border-radius:3px;background:linear-gradient(#68a6ee 0,#5a98e6 4px,#4a86dc 11.5px,#3669c8 12px,#2f5cba 17px,#2a50ae 22px);border:1px solid #3460b8;border-bottom-color:#24479c;box-shadow:inset 1px 1px 0 #7fb4f2"></div>
<div class="a" style="left:258px;top:574px;width:156px;height:24px;border-radius:3px;background:linear-gradient(#68a6ee 0,#5a98e6 4px,#4a86dc 11.5px,#3669c8 12px,#2f5cba 17px,#2a50ae 22px);border:1px solid #3460b8;border-bottom-color:#24479c;box-shadow:inset 1px 1px 0 #7fb4f2"></div>
<div class="a" style="left:417px;top:574px;width:158px;height:24px;border-radius:3px;background:linear-gradient(#3f66aa 0,#2f589f 5px,#254e98 11.5px,#1c3f8c 12px,#19398a 22px);border:1px solid #122a60;box-shadow:0 1px 0 #a9c4ee"></div>
<svg class="a" style="left:107px;top:577px" width="16" height="16" viewBox="0 0 16 16"><circle cx="8" cy="8" r="7.3" fill="#fbfbfb"/><path d="M4.6 3.4 L8 8.6 L11.4 3.4 M8 8.4 V13.4" fill="none" stroke="#e0282a" stroke-width="1.9"/></svg>
<div class="t" style="left:125.0px;top:578px;font-size:11px;letter-spacing:0.10px;color:#fff;">Радиолюбители Сан...</div>
<svg class="a" style="left:264px;top:576px" width="19" height="18" viewBox="0 0 19 18"><path d="M1.5 3 L1.5 14.5 L5 16.5" fill="none" stroke="#141a7a" stroke-width="1.4"/><path d="M1.5 4 L1.5 10" stroke="#2a8a3a" stroke-width="1.2"/><path d="M2.5 14 L15 14.5" stroke="#d0475a" stroke-width="1.2"/><ellipse cx="9.3" cy="8.2" rx="8" ry="4.3" transform="rotate(-32 9.3 8.2)" fill="#e3b3ea" stroke="#b67fc9" stroke-width=".8"/><ellipse cx="8.8" cy="7.6" rx="5.5" ry="2.2" transform="rotate(-32 8.8 7.6)" fill="#f1d3f3"/><circle cx="16.3" cy="3.6" r="1.4" fill="#f05030"/></svg>
<div class="t" style="left:285.0px;top:578px;font-size:11px;letter-spacing:-0.32px;color:#fff;">Gal_ana_demo</div>
<svg class="a" style="left:424px;top:574px" width="24" height="24" viewBox="0 0 24 24"><g fill="none" stroke="#0c0c80" stroke-width="1.3"><path d="M14.7 10.4 V5.2 H6.4 L4.2 8.2 L8.6 11.4 L4.2 15.4 L6.4 18.4 H14.7 V12.4 M11.2 10.4 H17.8 M11.2 12.4 H17.8"/></g><circle cx="10.4" cy="5.2" r="1.4" fill="#0c0c80"/><circle cx="10.4" cy="18.4" r="1.4" fill="#0c0c80"/></svg>

<div class="t" style="left:446.0px;top:578px;font-size:11px;letter-spacing:-0.23px;color:#fff;">Galtools</div>
<svg class="a" style="left:900px;top:572px" width="80" height="26" viewBox="900 572 80 26"><defs><linearGradient id="kr" x1="0" y1="0" x2="1" y2="1"><stop offset="0" stop-color="#f89a9a"/><stop offset=".55" stop-color="#ee2a2e"/><stop offset="1" stop-color="#e01018"/></linearGradient></defs><path d="M907.5 578.8 H911.2 V584 L916.4 578.8 H920.6 L911.2 591.5 H907.5 Z" fill="url(#kr)" stroke="#fdfdfd" stroke-width="1"/><rect x="913.6" y="584.6" width="7.4" height="7.2" fill="#fbfbfb"/><path d="M914.6 585.6 L919.2 590.2" stroke="#555" stroke-width="1.6"/><path d="M920.2 586.4 V591 H915.4 Z" fill="#111"/><g stroke="#4f6b50" stroke-width=".9"><rect x="925" y="587.4" width="2.6" height="3" fill="#a8eea8"/><rect x="928.6" y="584.6" width="2.6" height="5.8" fill="#b4f2b4"/><rect x="932.2" y="582" width="2.6" height="8.4" fill="#c4f2c4"/><rect x="935.8" y="579.2" width="2.8" height="11.2" fill="#ebe9e2" stroke="#77756c"/></g><path d="M943.5 579 V592 H957.6" fill="none" stroke="#0f2a8c" stroke-width="1.6"/><rect x="944.6" y="578" width="12.6" height="12.4" fill="#1f5fc2"/><path d="M944.6 578.2 H957.2" stroke="#6fa0e6" stroke-width="1" stroke-dasharray="1 1"/><circle cx="950.8" cy="584" r="2.6" fill="#4d8fe0"/><path d="M949 584 H952.6 M950.8 582.2 V585.8" stroke="#9cc6f4" stroke-width=".8" stroke-dasharray=".8 .8"/><path d="M967.6 577 L974.4 583.8 H960.8 Z" fill="#f00c10" stroke="#fff" stroke-width=".5"/><path d="M960 584.7 H976" stroke="#fdfdfd" stroke-width="1"/><path d="M960 585.7 H976" stroke="#111" stroke-width="1"/><path d="M963.2 587.2 H972 L967.6 591.8 Z" fill="#111" stroke="#fdfdfd" stroke-width=".8"/><rect x="966" y="585.8" width="3.4" height="3" fill="#111"/></svg>
<div class="t" style="left:982.5px;top:579px;font-size:11px;letter-spacing:0.09px;color:#10183a;">20:08</div>

</body>
</html>
